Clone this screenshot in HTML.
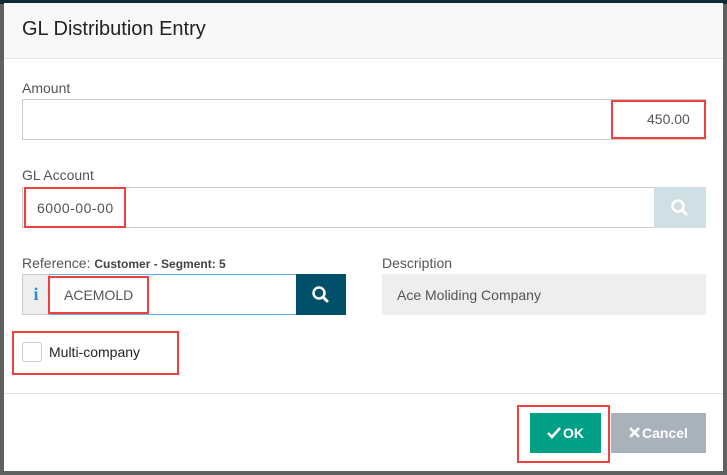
<!DOCTYPE html><html><head><style>
*{box-sizing:border-box;margin:0;padding:0}
body{width:727px;height:475px;background:#5f6060;position:relative;overflow:hidden;font-family:"Liberation Sans",sans-serif;color:#333}
.top{position:absolute;left:0;top:0;width:727px;height:4px;background:#0e2a33}
.m{position:absolute;left:4px;top:3px;width:719px;height:468px;background:#fff}
.h{position:absolute;left:0;top:0;width:719px;height:56px;background:#f8f8f8;border-bottom:1px solid #e5e5e5}
.h span{position:absolute;left:18px;top:15px;font-size:20px;color:#222}
.ab{position:absolute}
.lbl{font-size:14px;color:#555}
.inp{border:1px solid #ccc;background:#fff}
.red{border:2px solid #f04040}
.f{position:absolute;left:0;top:390px;width:719px;border-top:1px solid #e5e5e5}
</style></head><body>
<div class="top"></div>
<div class="m">
<div class="h"><span>GL Distribution Entry</span></div>
<div class="ab lbl" style="left:18px;top:77px">Amount</div>
<div class="ab inp" style="left:18px;top:96px;width:684px;height:41px"></div>
<div class="ab red" style="left:607px;top:97px;width:95px;height:39px"></div>
<div class="ab" style="left:643px;top:108px;font-size:14px;color:#555">450.00</div>
<div class="ab lbl" style="left:18px;top:164px">GL Account</div>
<div class="ab inp" style="left:18px;top:184px;width:634px;height:41px"></div>
<div class="ab" style="left:650px;top:184px;width:52px;height:41px;background:#d0dfe3"><svg width="52" height="41"><circle cx="24" cy="19" r="5.5" fill="none" stroke="#fff" stroke-width="2.5"/><line x1="28" y1="23" x2="32" y2="27" stroke="#fff" stroke-width="3" stroke-linecap="round"/></svg></div>
<div class="ab red" style="left:20px;top:184px;width:102px;height:41px"></div>
<div class="ab" style="left:33px;top:197px;font-size:14px;color:#555;letter-spacing:.5px">6000-00-00</div>
<div class="ab lbl" style="left:18px;top:252px">Reference: <b style="font-size:12px;color:#444">Customer - Segment: 5</b></div>
<div class="ab" style="left:18px;top:271px;width:28px;height:41px;background:#eee;border:1px solid #ccc;color:#2a8fd0;font-weight:bold;font-size:18px;text-align:center;line-height:38px;font-family:'Liberation Serif',serif">i</div>
<div class="ab" style="left:45px;top:271px;width:248px;height:41px;border:1px solid #66afe9;background:#fff"></div>
<div class="ab" style="left:292px;top:271px;width:50px;height:41px;background:#00506a"><svg width="50" height="41"><circle cx="23" cy="19" r="5.5" fill="none" stroke="#fff" stroke-width="2.5"/><line x1="27" y1="23" x2="31" y2="27" stroke="#fff" stroke-width="3" stroke-linecap="round"/></svg></div>
<div class="ab red" style="left:44px;top:273px;width:101px;height:38px"></div>
<div class="ab" style="left:60px;top:284px;font-size:14px;color:#555">ACEMOLD</div>
<div class="ab lbl" style="left:378px;top:252px">Description</div>
<div class="ab" style="left:378px;top:271px;width:324px;height:41px;background:#eee"></div>
<div class="ab" style="left:393px;top:284px;font-size:14px;color:#555">Ace Moliding Company</div>
<div class="ab" style="left:18px;top:339px;width:20px;height:20px;border:1px solid #ccc;border-radius:3px"></div>
<div class="ab red" style="left:8px;top:328px;width:167px;height:44px"></div>
<div class="ab" style="left:45px;top:341px;font-size:14px;color:#222">Multi-company</div>
<div class="f"></div>
<div class="ab" style="left:526px;top:410px;width:71px;height:40px;background:#00a086;color:#fff;font-size:14px;font-weight:bold;line-height:40px;text-align:center"><svg width="14" height="12" style="vertical-align:-1px;margin-right:2px"><path d="M1 6 L5 10 L13 1" fill="none" stroke="#fff" stroke-width="2.6"/></svg>OK</div>
<div class="ab red" style="left:513px;top:402px;width:93px;height:58px"></div>
<div class="ab" style="left:607px;top:410px;width:95px;height:40px;background:#a9b1bb;color:#fff;font-size:14px;font-weight:bold;line-height:40px;text-align:center"><svg width="11" height="11" style="vertical-align:0px;margin-right:2px"><path d="M1 1 L10 10 M10 1 L1 10" stroke="#fff" stroke-width="2.6"/></svg>Cancel</div>
</div>
</body></html>
